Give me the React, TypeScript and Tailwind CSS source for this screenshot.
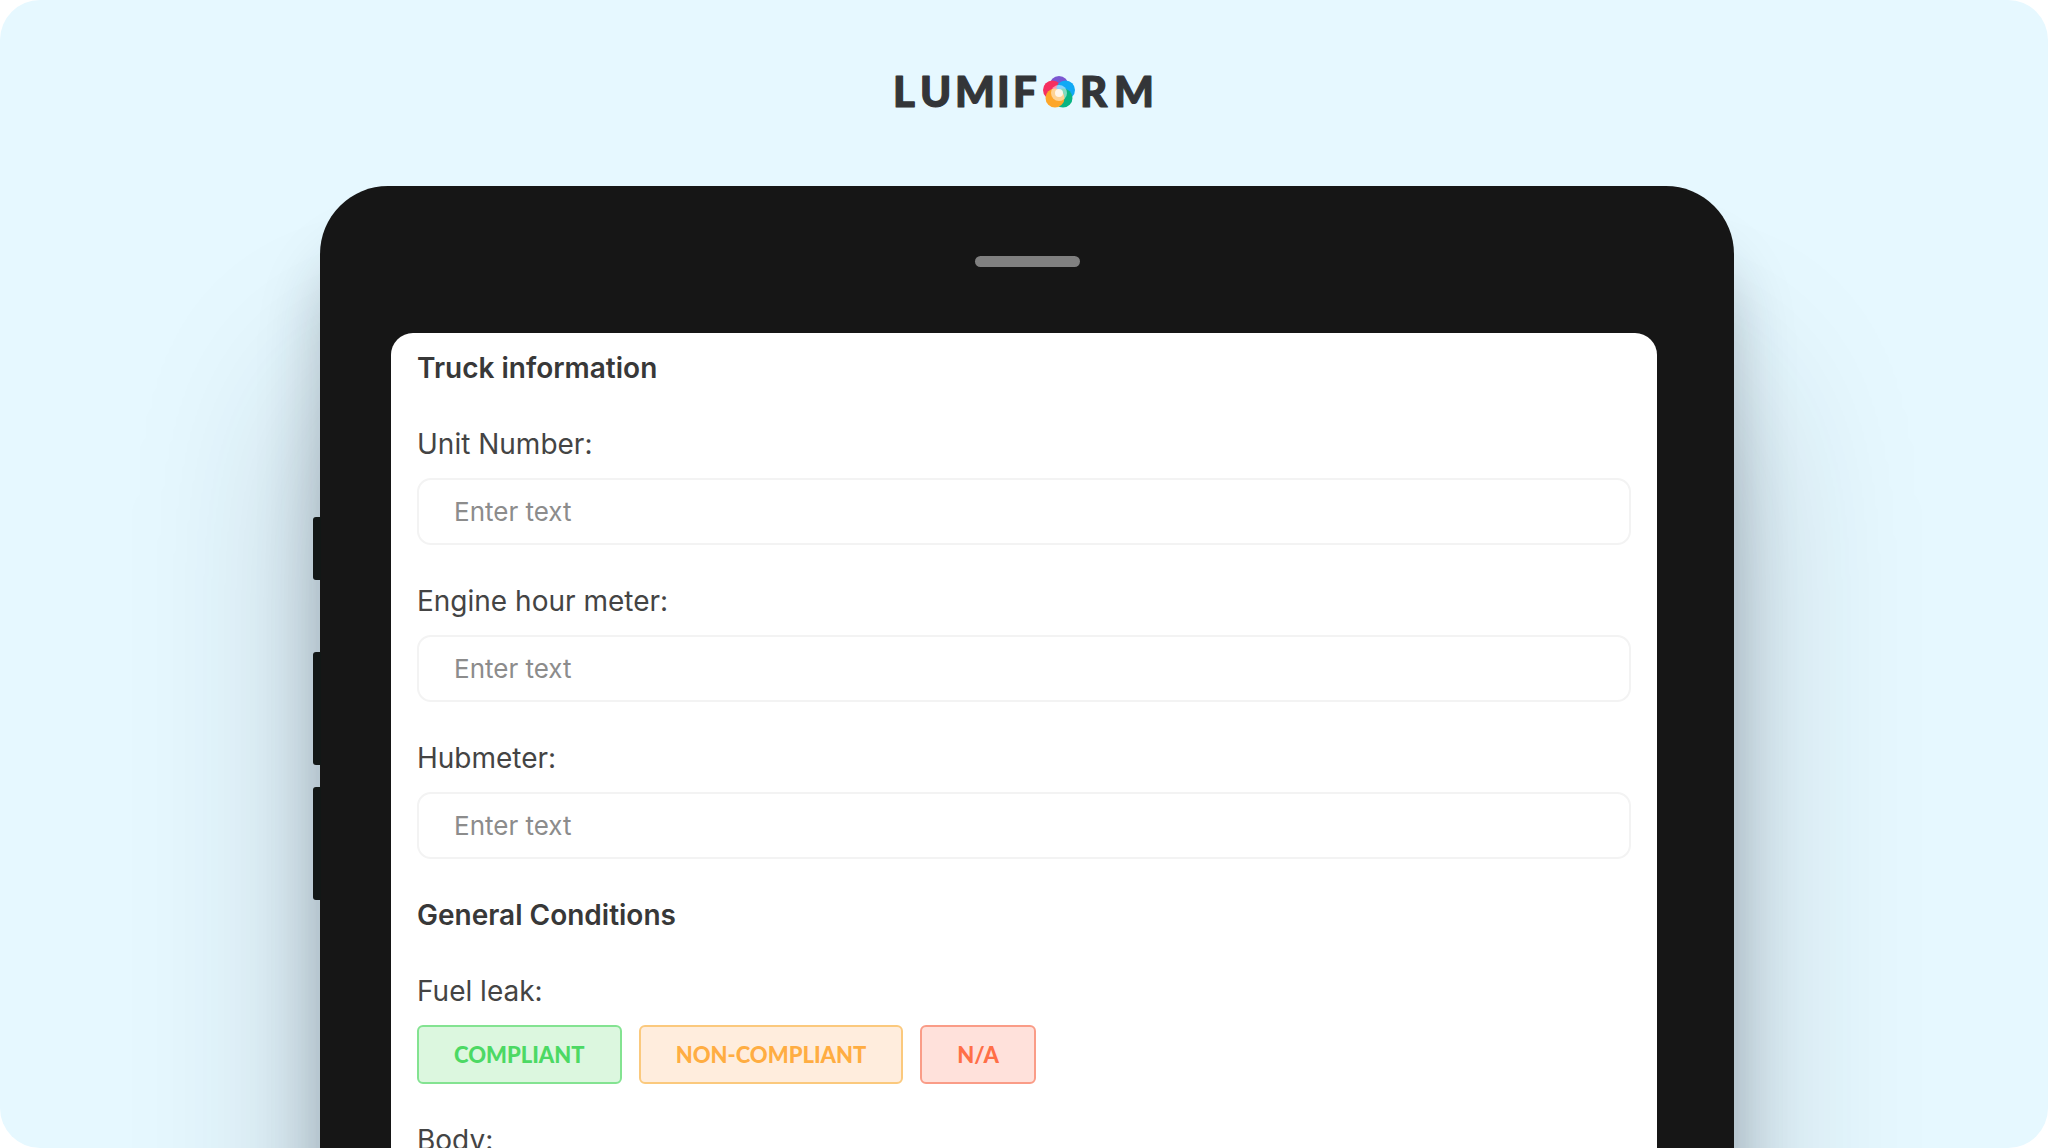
import React from 'react';

interface FieldProps {
    id: string;
    label: string;
}

const TextField: React.FC<FieldProps> = ({ id, label }) => {
    return (
        <div className="flex flex-col gap-[18px]">
            <label htmlFor={id} className="text-[28px] leading-8 text-[#444444]">
                {label}
            </label>
            <input
                id={id}
                type="text"
                placeholder="Enter text"
                className="h-[67px] w-full rounded-[14px] border-2 border-[#f3f3f3] bg-white px-[35px] text-[26px] text-[#444444] placeholder-[#8c8c8c] outline-none focus:border-gray-300"
            />
        </div>
    );
};

const Logo: React.FC = () => {
    return (
        <svg viewBox="0 0 260 40" className="h-10 w-[260px]" role="img" aria-label="Lumiform">
            <g
                fontFamily="Lato, sans-serif"
                fontWeight="900"
                fontSize="42"
                fill="#333538"
                stroke="#333538"
                strokeWidth="1.2"
                strokeLinejoin="round"
            >
                <text x="-1 26 61 103 119" y="35">LUMIF</text>
                <text x="186 220" y="35">RM</text>
            </g>
            {/* five overlapping petals with a white core */}
            <g>
                <circle cx="165" cy="13.5" r="9.5" fill="#7b57d1" />
                <circle cx="158.500" cy="18" r="9.500" fill="#f52f5f" />
                <circle cx="171.500" cy="18" r="9.500" fill="#10a9f5" />
                <circle cx="169" cy="26" r="9.500" fill="#08b583" />
                <circle cx="161" cy="26" r="9.500" fill="#fda629" />
                <circle cx="165" cy="21" r="8" fill="#ffffff" opacity="0.5" />
                <circle cx="165" cy="21" r="4" fill="#ffffff" opacity="0.8" />
            </g>
        </svg>
    );
};

const App: React.FC = () => {
    return (
        <div className="h-screen bg-white font-['Inter',sans-serif]">
            <main className="flex h-full flex-col overflow-hidden rounded-[40px] bg-[#e6f8ff]">
                <header className="flex h-[186px] shrink-0 justify-center pt-[72px]">
                    <Logo />
                </header>

                <div className="grid grow grid-cols-[320fr_1414fr_314fr]">
                    <section className="relative col-start-2 flex flex-col rounded-t-[68px] bg-[#161616] pr-[77px] pl-[71px] shadow-[0_70px_60px_rgba(30,40,50,0.25),0_200px_180px_rgba(30,40,50,0.25)]">
                        <span className="absolute top-[331px] -left-[7px] h-[63px] w-2 rounded-l-[3px] bg-[#121716]" />
                        <span className="absolute top-[466px] -left-[7px] h-[113px] w-2 rounded-l-[3px] bg-[#121716]" />
                        <span className="absolute top-[601px] -left-[7px] h-[113px] w-2 rounded-l-[3px] bg-[#121716]" />

                        <div className="flex h-[147px] shrink-0 justify-center pt-[70px] pl-[6px]">
                            <span className="h-[11px] w-[105px] rounded-full bg-[#808080]" />
                        </div>

                        <form className="flex grow flex-col gap-10 rounded-t-[22px] bg-white px-[26px] pt-[19px]">
                            <div className="flex flex-col gap-11">
                                <h2 className="text-[28px] leading-8 font-semibold text-[#383838]">Truck information</h2>
                                <TextField id="unitNumber" label="Unit Number:" />
                            </div>
                            <TextField id="engineHours" label="Engine hour meter:" />
                            <TextField id="hubmeter" label="Hubmeter:" />

                            <div className="flex flex-col gap-11">
                                <h2 className="text-[28px] leading-8 font-semibold text-[#383838]">General Conditions</h2>
                                <div role="group" aria-labelledby="fuelLeak" className="flex flex-col gap-[18px]">
                                    <p id="fuelLeak" className="text-[28px] leading-8 text-[#444444]">Fuel leak:</p>
                                    <div className="flex gap-[17px] font-['Lato',sans-serif] text-[22px] font-black">
                                        <button type="button" className="h-[59px] rounded-md border-2 border-[#83e391] bg-[#dcf7df] px-[35px] text-[#4cd964]">
                                            COMPLIANT
                                        </button>
                                        <button type="button" className="h-[59px] rounded-md border-2 border-[#fbc97d] bg-[#ffeddd] px-[35px] text-[#ffad42]">
                                            NON-COMPLIANT
                                        </button>
                                        <button type="button" className="h-[59px] rounded-md border-2 border-[#fa9c87] bg-[#ffe1db] px-[35px] text-[#ff6f47]">
                                            N/A
                                        </button>
                                    </div>
                                </div>
                            </div>

                            <p className="text-[28px] leading-8 text-[#444444]">Body:</p>
                        </form>
                    </section>
                </div>
            </main>
        </div>
    );
};

export default App;
